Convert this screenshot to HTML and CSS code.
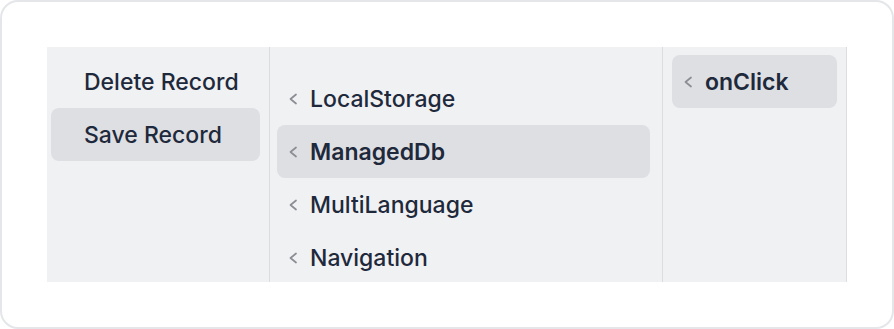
FILE: index.html
```html
<!DOCTYPE html>
<html lang="en">
  <head>
    <meta charset="UTF-8" />
    <title>Cascader</title>
    <link rel="stylesheet" href="styles.css">
  </head>
  <body>
    <div class="card">
      <div class="cascader">
        <div class="column col-actions">
          <div class="item">
            <span class="chev"></span>
            <span class="label">Delete Record</span>
          </div>
          <div class="item active">
            <span class="chev"></span>
            <span class="label">Save Record</span>
          </div>
        </div>
        <div class="column col-modules">
          <div class="item">
            <svg class="chev" viewBox="0 0 10 12"><path d="M7 1.5 L1.5 6 L7 10.5" /></svg>
            <span class="label">LocalStorage</span>
          </div>
          <div class="item active strong">
            <svg class="chev" viewBox="0 0 10 12"><path d="M7 1.5 L1.5 6 L7 10.5" /></svg>
            <span class="label">ManagedDb</span>
          </div>
          <div class="item">
            <svg class="chev" viewBox="0 0 10 12"><path d="M7 1.5 L1.5 6 L7 10.5" /></svg>
            <span class="label">MultiLanguage</span>
          </div>
          <div class="item">
            <svg class="chev" viewBox="0 0 10 12"><path d="M7 1.5 L1.5 6 L7 10.5" /></svg>
            <span class="label">Navigation</span>
          </div>
        </div>
        <div class="column col-events">
          <div class="item active strong">
            <svg class="chev" viewBox="0 0 10 12"><path d="M7 1.5 L1.5 6 L7 10.5" /></svg>
            <span class="label">onClick</span>
          </div>
        </div>
      </div>
    </div>
  </body>
</html>
```

FILE: styles.css
```css
body {
  margin: 0;
  background-color: #ffffff;
  font-family: "Inter", "Liberation Sans", sans-serif;
}

.card {
  box-sizing: border-box;
  width: 894px;
  height: 329px;
  border: 2px solid #e4e6e9;
  border-radius: 18px;
  padding: 45px 45px 0 45px;
  background-color: #ffffff;
}

.cascader {
  display: flex;
  width: 800px;
  height: 235px;
  background-color: #f0f1f3;
  overflow: hidden;
}

.column {
  box-sizing: border-box;
  border-right: 1px solid #dcdde1;
  display: flex;
  flex-direction: column;
}

.col-actions {
  width: 223px;
  padding: 8px 9px 0 4px;
}

.col-modules {
  width: 393px;
  padding: 25px 12px 0 7px;
}

.col-events {
  width: 184px;
  padding: 8px 9px 0 9px;
}

.item {
  display: flex;
  align-items: center;
  gap: 11px;
  height: 53px;
  flex-shrink: 0;
  padding: 0 12px;
  border-radius: 8px;
  color: #1e293b;
  font-size: 23px;
  font-weight: 500;
  white-space: nowrap;
}

.item.active {
  background-color: #dedfe3;
}

.item.strong {
  font-weight: 600;
}

.chev {
  display: inline-block;
  width: 10px;
  height: 12px;
  flex-shrink: 0;
  fill: none;
  stroke: #8a8d93;
  stroke-width: 1.7;
  stroke-linecap: round;
  stroke-linejoin: round;
}
```
